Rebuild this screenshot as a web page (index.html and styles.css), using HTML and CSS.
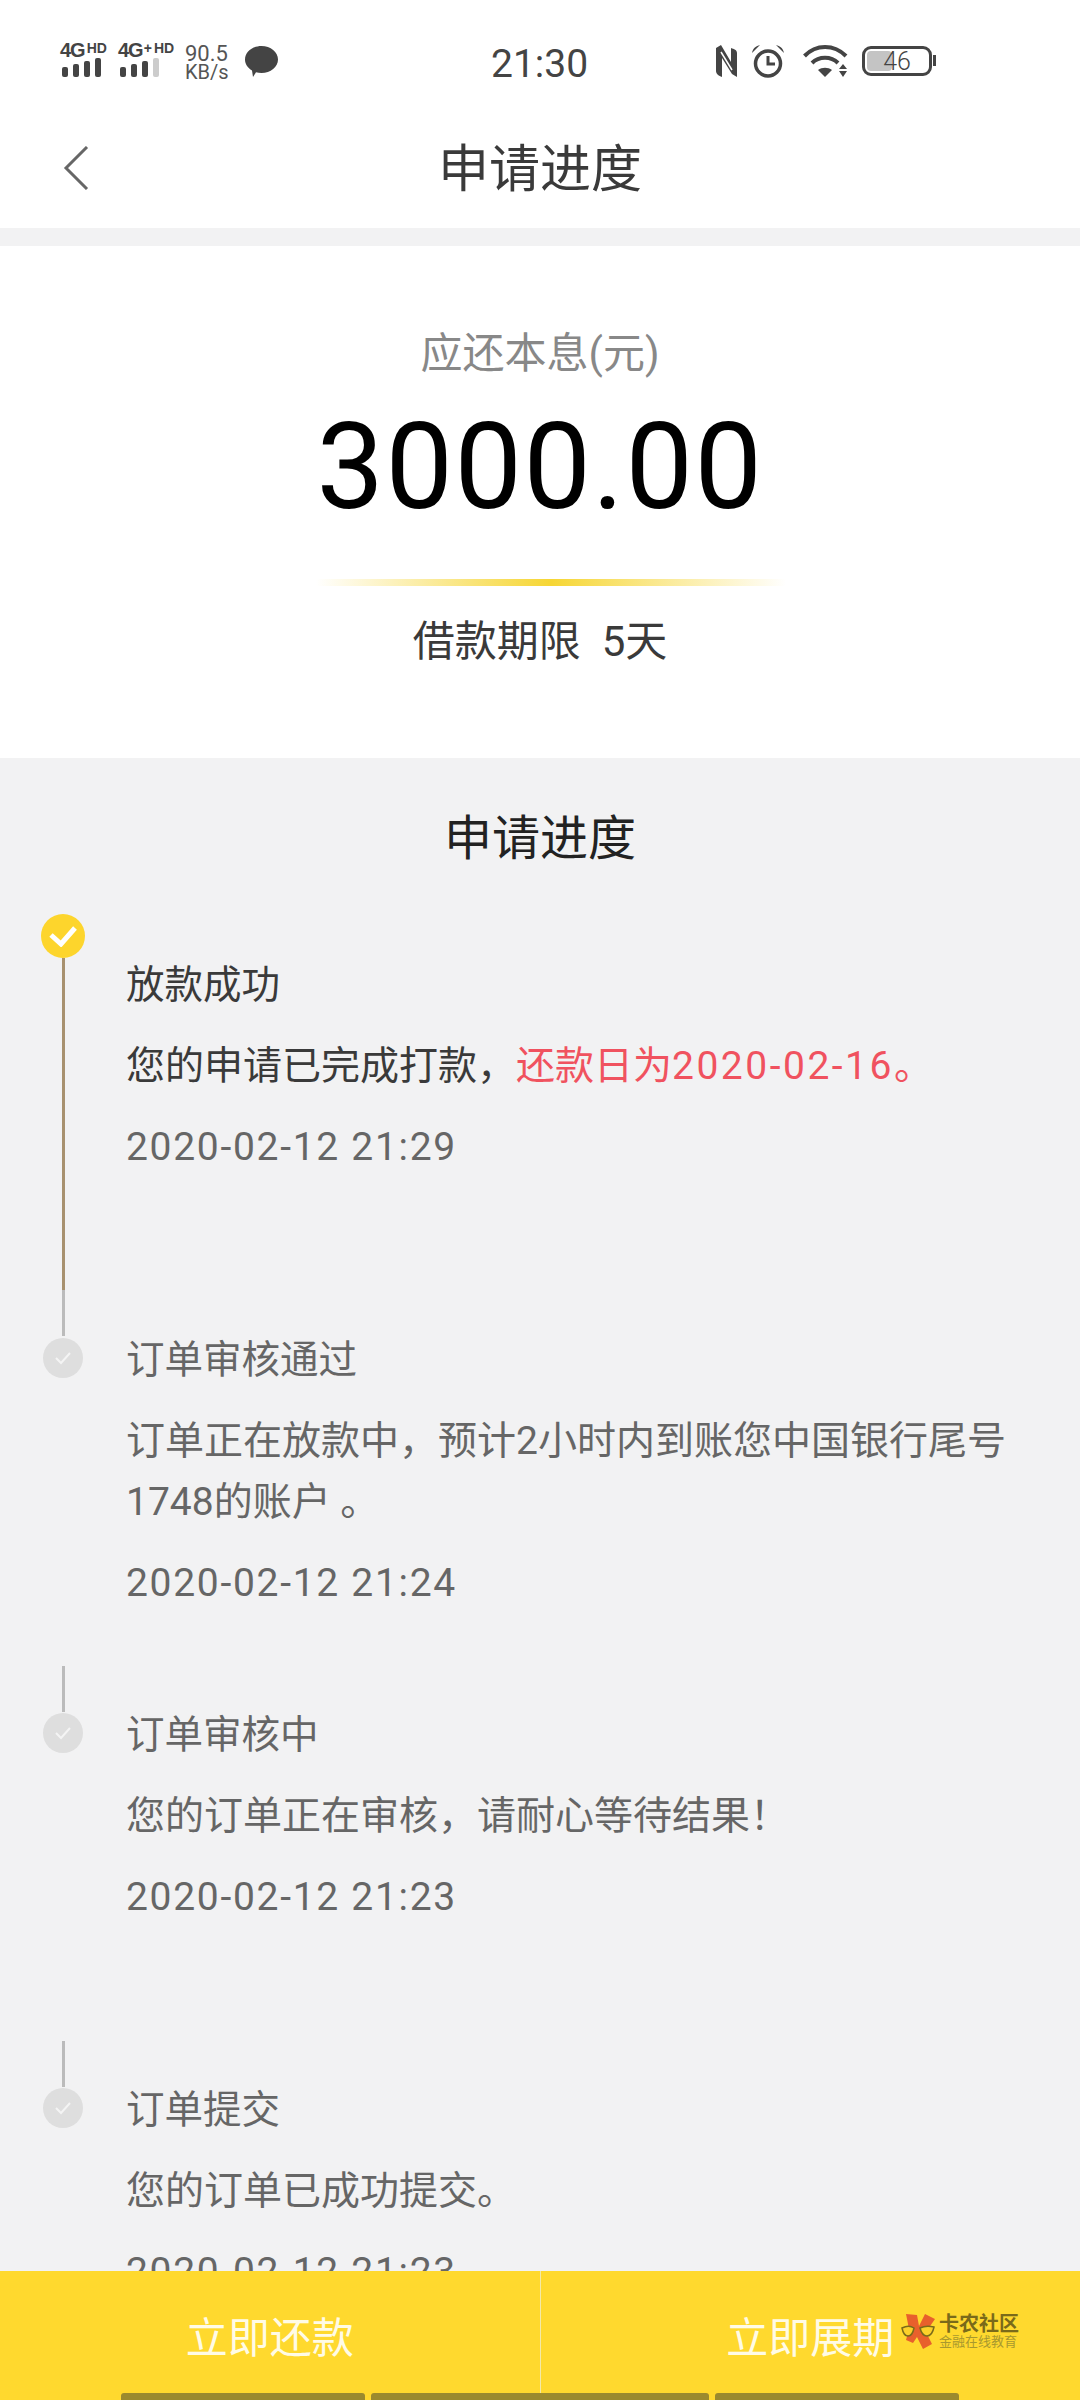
FILE: index.html
```html
<!DOCTYPE html>
<html lang="zh-CN">
<head>
    <meta charset="UTF-8">
    <meta name="viewport" content="width=device-width, initial-scale=1.0">
    <title>申请进度</title>
    <link rel="stylesheet" href="styles.css">
</head>
<body>
<div class="page">
    <div class="status-bar">
        <div class="status-left">
            <div class="signal">
                <div class="signal-label"><span class="net">4G</span><span class="hd">HD</span></div>
                <div class="bars"><i class="b1"></i><i class="b2"></i><i class="b3"></i><i class="b4"></i></div>
            </div>
            <div class="signal signal-second">
                <div class="signal-label"><span class="net">4G</span><span class="hd plus">+</span><span class="hd">HD</span></div>
                <div class="bars"><i class="b1"></i><i class="b2"></i><i class="b3"></i><i class="b4 off"></i></div>
            </div>
            <div class="speed"><span>90.5</span><span class="speed-unit">KB/s</span></div>
            <svg class="bubble" width="33" height="31" viewBox="0 0 33 31">
                <path d="M16.5 0C25.600 0 33 6 33 13.500S25.600 27 16.500 27c-2 0-3.800-.3-5.500-.8L8 31l-1-6.500C2.700 22 0 18 0 13.500 0 6 7.400 0 16.500 0z" fill="#444"/>
            </svg>
        </div>
        <div class="status-time">21:30</div>
        <div class="status-right">
            <svg width="21" height="32" viewBox="0 0 21 32">
                <path d="M0 3l5-3 10 17V3c3 1 6 2 6 5v24l-5-3L6 13v19c-3-1-6-3-6-6z" fill="#444"/>
                <path d="M5 7L16 25" stroke="#fff" stroke-width="1.500"/>
            </svg>
            <svg width="34" height="33" viewBox="0 0 34 33">
                <circle cx="17" cy="18.500" r="12.500" fill="none" stroke="#444" stroke-width="3.500"/>
                <path d="M17 11v8h7" fill="none" stroke="#444" stroke-width="3"/>
                <path d="M1 8C2 3 5 1 9 0zM33 8C32 3 29 1 25 0z" fill="#444"/>
            </svg>
            <svg class="wifi" width="45" height="32" viewBox="0 0 45 32">
                <path d="M1.500 11C13 -1 31 -1 43 11M9 18c7-7 19-7 26 0" fill="none" stroke="#444" stroke-width="4"/>
                <path d="M15 25c4-3 10-3 14 0l-7 7z" fill="#444"/>
                <path d="M36 24h8l-4-5zM36 26h8l-4 6z" fill="#444"/>
            </svg>
            <div class="battery">
                <div class="battery-fill"></div>
                <span class="battery-level">46</span>
            </div>
        </div>
    </div>

    <div class="nav">
        <svg class="back" width="26" height="44" viewBox="0 0 26 44">
            <path d="M24 1L3 22l21 21" fill="none" stroke="#666" stroke-width="3"/>
        </svg>
        <h1>申请进度</h1>
    </div>

    <section class="summary">
        <p class="summary-label">应还本息(元)</p>
        <p class="amount">3000.00</p>
        <div class="glow"></div>
        <p class="term"><span>借款期限</span><span>5天</span></p>
    </section>

    <main class="progress">
        <h2>申请进度</h2>
        <div class="timeline">
            <div class="rail">
                <div class="dot dot-done">
                    <svg width="28" height="22" viewBox="0 0 28 22"><path d="M2 10l10 9L26 3" fill="none" stroke="#fff" stroke-width="5"/></svg>
                </div>
                <div class="line line-done"></div>
                <div class="line line-a"></div>
                <div class="dot">
                    <svg width="18" height="14" viewBox="0 0 18 14"><path d="M2 7l5 5 9-10" fill="none" stroke="#f4f4f4" stroke-width="2"/></svg>
                </div>
                <div class="line line-b"></div>
                <div class="dot">
                    <svg width="18" height="14" viewBox="0 0 18 14"><path d="M2 7l5 5 9-10" fill="none" stroke="#f4f4f4" stroke-width="2"/></svg>
                </div>
                <div class="line line-b"></div>
                <div class="dot">
                    <svg width="18" height="14" viewBox="0 0 18 14"><path d="M2 7l5 5 9-10" fill="none" stroke="#f4f4f4" stroke-width="2"/></svg>
                </div>
            </div>
            <div class="steps">
                <div class="step step-current">
                    <h3>放款成功</h3>
                    <p>您的申请已完成打款，<span class="due">还款日为<span class="due-date">2020-02-16</span>。</span></p>
                    <p class="time">2020-02-12 21:29</p>
                </div>
                <div class="step">
                    <h3>订单审核通过</h3>
                    <p>订单正在放款中，预计2小时内到账您中国银行尾号<br>1748的账户 。</p>
                    <p class="time">2020-02-12 21:24</p>
                </div>
                <div class="step">
                    <h3>订单审核中</h3>
                    <p>您的订单正在审核，请耐心等待结果！</p>
                    <p class="time">2020-02-12 21:23</p>
                </div>
                <div class="step">
                    <h3>订单提交</h3>
                    <p>您的订单已成功提交。</p>
                    <p class="time">2020-02-12 21:23</p>
                </div>
            </div>
        </div>
    </main>

    <footer class="actions">
        <button class="action">立即还款</button>
        <button class="action">立即展期</button>
        <div class="watermark">
            <svg width="36" height="36" viewBox="0 0 36 36">
                <path d="M5 1l11 1 2 11 6-12 10 5-9 13 6 12-9 5-6-12-4 6-7-3 3-11z" fill="#e8602c"/>
                <path d="M1 15c4-2 9-2 12 0-1 5-3 8-6 8s-5-3-6-8zM19 15c4-2 10-2 14-1-1 5-3 9-7 9s-6-4-7-8z" fill="#fcd12a" stroke="#7a6a1a" stroke-width="1.500"/>
            </svg>
            <div class="watermark-text">
                <span class="wm-name">卡农社区</span>
                <span class="wm-sub">金融在线教育</span>
            </div>
        </div>
        <div class="strip"><i class="s1"></i><i class="s2"></i><i class="s3"></i></div>
    </footer>
</div>
</body>
</html>
```

FILE: styles.css
```css
* {
    box-sizing: border-box;
}

html, body {
    margin: 0;
    padding: 0;
}

body {
    font-family: "Roboto", "Noto Sans CJK SC", sans-serif;
    color: #333;
    background-color: #f2f2f3;
}

p, h1, h2, h3 {
    margin: 0;
    font-weight: normal;
}

.page {
    width: 1080px;
    height: 2400px;
    display: flex;
    flex-direction: column;
    overflow: hidden;
}

/* status bar */
.status-bar {
    height: 122px;
    background-color: #fff;
    display: flex;
    align-items: flex-start;
    padding: 43px 0 0 60px;
    color: #444;
}

.status-left {
    width: 431px;
    display: flex;
    align-items: flex-start;
}

.signal {
    width: 58px;
    display: flex;
    flex-direction: column;
}

.signal-second {
    width: 67px;
}

.signal-label {
    height: 14px;
    display: flex;
    align-items: flex-start;
    gap: 2px;
    line-height: 14px;
    font-family: "Liberation Sans", sans-serif;
    font-weight: bold;
    white-space: nowrap;
}

.net {
    font-size: 20px;
    letter-spacing: -1px;
}

.hd {
    font-size: 14px;
    line-height: 10px;
}

.plus {
    margin-left: -1px;
}

.bars {
    margin: 0 0 0 2px;
    height: 20px;
    display: flex;
    align-items: flex-end;
    gap: 5px;
}

.bars i {
    width: 6px;
    background-color: #444;
    border-radius: 2px;
}

.bars .off {
    background-color: #ccc;
}

.b1 { height: 10px; }
.b2 { height: 13px; }
.b3 { height: 16px; }
.b4 { height: 19px; }

.speed {
    width: 60px;
    display: flex;
    flex-direction: column;
    font-size: 22px;
    line-height: 19px;
    padding-top: 1px;
    color: #555;
}

.speed-unit {
    font-size: 20px;
}

.bubble {
    margin-top: 3px;
}

.status-time {
    font-size: 39px;
    line-height: 38px;
    margin-top: 2px;
    color: #444;
    width: 225px;
}

.status-right {
    display: flex;
    align-items: center;
    height: 36px;
    gap: 14px;
}

.wifi {
    margin-left: 4px;
}

.battery {
    width: 70px;
    height: 30px;
    border: 3px solid #444;
    border-radius: 9px;
    position: relative;
    display: flex;
    align-items: center;
    justify-content: center;
}

.battery::after {
    content: "";
    position: absolute;
    right: -7px;
    top: 6px;
    width: 3px;
    height: 11px;
    background-color: #444;
}

.battery-fill {
    position: absolute;
    left: 2px;
    top: 2px;
    bottom: 2px;
    width: 25px;
    border-radius: 4px;
    background-color: #c4c4c4;
}

.battery-level {
    position: relative;
    font-size: 25px;
    font-weight: 300;
    color: #444;
}

/* header */
.nav {
    height: 106px;
    background-color: #fff;
    display: flex;
    align-items: flex-start;
    position: relative;
    justify-content: center;
}

.nav h1 {
    font-size: 51px;
    line-height: 96px;
    color: #3a3a3a;
}

.back {
    position: absolute;
    left: 63px;
    top: 24px;
}

/* amount block */
.summary {
    margin-top: 18px;
    height: 512px;
    background-color: #fff;
    display: flex;
    flex-direction: column;
    align-items: center;
}

.summary-label {
    margin-top: 80px;
    font-size: 42px;
    line-height: 56px;
    color: #888;
}

.amount {
    margin-top: 15px;
    font-size: 120px;
    line-height: 140px;
    letter-spacing: 1.5px;
    color: #000;
}

.glow {
    margin-top: 42px;
    margin-left: 22px;
    width: 470px;
    height: 7px;
    background: linear-gradient(to right, rgba(246, 214, 52, 0), #f6d634 50%, rgba(246, 214, 52, 0));
}

.term {
    margin-top: 28px;
    font-size: 42px;
    line-height: 56px;
    color: #3a3a3a;
    display: flex;
    gap: 21px;
}

/* timeline */
.progress {
    flex: 1;
    min-height: 0;
    overflow: hidden;
}

.progress h2 {
    margin-top: 51px;
    text-align: center;
    font-size: 48px;
    line-height: 60px;
    color: #222;
}

.timeline {
    display: flex;
    margin-top: 45px;
}

.rail {
    width: 126px;
    display: flex;
    flex-direction: column;
    align-items: center;
    flex-shrink: 0;
}

.dot {
    width: 40px;
    height: 40px;
    border-radius: 50%;
    background-color: #dedede;
    display: flex;
    align-items: center;
    justify-content: center;
}

.dot-done {
    width: 44px;
    height: 44px;
    background-color: #fdd52c;
}

.line {
    width: 3px;
}

.line-done {
    height: 332px;
    background-color: #a8916f;
}

.line-a {
    height: 46px;
    margin-bottom: 2px;
    background-color: #bbb;
}

.line-b {
    height: 46px;
    margin: 288px 0 1px;
    background-color: #bbb;
}

.steps {
    flex: 1;
    padding-top: 45px;
}

.step {
    height: 375px;
    font-size: 39px;
    color: #666;
}

.step h3 {
    font-size: 38.5px;
    line-height: 52px;
    margin-bottom: 25px;
}

.step p {
    line-height: 61px;
}

.step p.time {
    margin-top: 20px;
    letter-spacing: 1.7px;
    color: #666;
}

.step-current h3,
.step-current p {
    color: #3a3a3a;
}

.step-current p.time {
    color: #666;
}

.due {
    color: #f0525f;
}

.due-date {
    letter-spacing: 2.5px;
}

/* bottom actions */
.actions {
    height: 129px;
    flex-shrink: 0;
    background-color: #ffd92e;
    display: flex;
    position: relative;
}

.action {
    flex: 1;
    border: 0;
    padding: 0 0 2px;
    background: none;
    font-family: inherit;
    font-size: 42px;
    color: #fffbe6;
}

.action + .action {
    border-left: 1px solid #f3e9a8;
}

.watermark {
    position: absolute;
    left: 901px;
    top: 42px;
    display: flex;
    gap: 2px;
}

.watermark-text {
    display: flex;
    flex-direction: column;
}

.wm-name {
    font-size: 20px;
    line-height: 22px;
    font-weight: bold;
    color: #7a6a1a;
}

.wm-sub {
    font-size: 13px;
    line-height: 14px;
    color: #a8982e;
}

.strip {
    position: absolute;
    left: 121px;
    bottom: 0;
    display: flex;
    gap: 6px;
}

.strip i {
    height: 7px;
    background-color: #9a8a2e;
    border-radius: 3px 3px 0 0;
}

.s1 { width: 244px; }
.s2 { width: 338px; }
.s3 { width: 244px; }
```
